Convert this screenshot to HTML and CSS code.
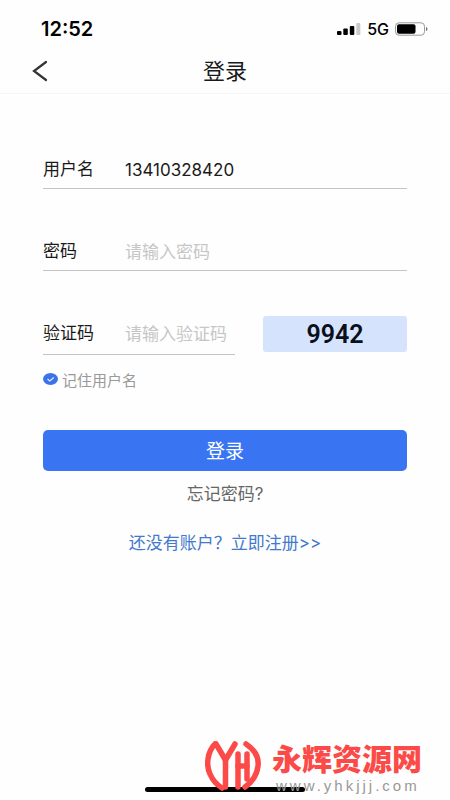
FILE: index.html
```html
<!DOCTYPE html>
<html lang="zh-CN">
<head>
<meta charset="utf-8">
<meta name="viewport" content="width=device-width, initial-scale=1">
<title>登录</title>
<link rel="stylesheet" href="styles.css">
</head>
<body>
<div class="page">
  <div class="status">
    <span class="time">12:52</span>
    <div class="status-right">
      <svg class="signal" width="24" height="12" viewBox="0 0 24 12" aria-hidden="true">
        <rect x="0" y="8" width="4.500" height="4" rx="1"/>
        <rect x="6.300" y="5.500" width="4.500" height="6.500" rx="1"/>
        <rect x="12.800" y="3" width="4.500" height="9" rx="1"/>
        <rect x="19.300" y="0" width="4" height="12" rx="1" fill="#c9c9c9"/>
      </svg>
      <span class="network">5G</span>
      <svg class="battery" width="33" height="14" viewBox="0 0 33 14" aria-hidden="true">
        <rect x="0.500" y="0.800" width="29" height="12.400" rx="3.500" fill="#fff" stroke="#999"/>
        <rect x="2" y="2.200" width="18.500" height="9.600" rx="2"/>
        <path d="M31 4.800Q32.500 5.500 32.500 7T31 9.200Z" fill="#777"/>
      </svg>
    </div>
  </div>
  <header class="header">
    <button class="back" type="button" aria-label="返回">
      <svg width="16" height="22" viewBox="0 0 16 22" aria-hidden="true"><path d="M14 2L2 11L14 20" fill="none" stroke="#333" stroke-width="2.200" stroke-linecap="round"/></svg>
    </button>
    <h1 class="title">登录</h1>
  </header>
  <form class="form">
    <div class="field">
      <label for="user">用户名</label>
      <input id="user" type="text" value="13410328420">
    </div>
    <div class="field">
      <label for="pass">密码</label>
      <input id="pass" type="password" placeholder="请输入密码">
    </div>
    <div class="code-row">
      <div class="field">
        <label for="code">验证码</label>
        <input id="code" type="text" placeholder="请输入验证码">
      </div>
      <button class="captcha" type="button">9942</button>
    </div>
    <label class="remember">
      <span class="tick">
        <input type="checkbox" checked>
        <svg width="15" height="12" viewBox="0 0 15 12" aria-hidden="true"><path d="M4.500 6L6.800 8L10.800 4.500" fill="none" stroke="#dfe9ff" stroke-width="1.200"/></svg>
      </span>
      记住用户名
    </label>
    <button class="submit" type="submit">登录</button>
    <a class="forgot" href="#">忘记密码?</a>
    <a class="register" href="#">还没有账户？立即注册&gt;&gt;</a>
  </form>
  <footer class="footer">
    <div class="home-bar"></div>
    <div class="brand">
      <svg class="logo" width="56" height="50" viewBox="0 0 56 50" aria-hidden="true">
        <g fill="none" stroke="#fb4a48" stroke-width="5.500" stroke-linecap="round" stroke-linejoin="round">
          <path d="M10 3C2 11 1 25 5 33C8 40 12 44 17 47"/>
          <path d="M11 3L20.500 19L30 3"/>
          <path d="M20.500 19V46"/>
          <path d="M33 13V46"/>
          <path d="M33 25H42"/>
          <path d="M42 13V38"/>
          <path d="M41 3C50 9 54 17 53 25C52 34 47 41 40 46"/>
        </g>
      </svg>
      <div class="brand-text">
        <span class="brand-name">永辉资源网</span>
        <span class="brand-url">www.yhkjjj.com</span>
      </div>
    </div>
  </footer>
</div>
</body>
</html>
```
FILE: styles.css
```css
* {
  box-sizing: border-box;
}

body {
  margin: 0;
  background: #fefefe;
  color: #1a1a1a;
  font-family: Inter, "Noto Sans CJK SC", sans-serif;
  font-size: 17px;
}

button,
input {
  border: 0;
  padding: 0;
  background: none;
  color: inherit;
  font: inherit;
}

a {
  text-decoration: none;
}

svg {
  display: block;
}

.page {
  display: flex;
  flex-direction: column;
  min-height: 100vh;
}

.status {
  display: flex;
  align-items: center;
  justify-content: space-between;
  height: 48px;
  padding: 10px 22px 0 41px;
  color: #000;
}

.time {
  font-size: 20px;
  font-weight: 600;
}

.status-right {
  display: flex;
  align-items: center;
  gap: 6px;
}

.network {
  font-size: 16px;
  font-weight: 500;
}

.header {
  display: grid;
  grid-template-columns: 48px 1fr 48px;
  align-items: center;
  height: 46px;
  border-bottom: 1px solid #f5f5f5;
}

.back {
  justify-self: end;
}

.title {
  margin: 0;
  font-size: 22px;
  font-weight: 400;
  line-height: 32px;
  text-align: center;
}

.form {
  display: flex;
  flex-direction: column;
  padding: 57px 43px 0;
}

.field {
  display: flex;
  align-items: center;
  height: 38px;
  margin-bottom: 44px;
  border-bottom: 1px solid #c4c4c4;
}

.field label {
  flex: 0 0 82px;
  line-height: 36px;
  padding-bottom: 2px;
}

.field input {
  flex: 1;
  min-width: 0;
  height: 36px;
  outline: 0;
}

.field input::placeholder {
  color: #c6c6c6;
  opacity: 1;
}

.code-row {
  display: grid;
  grid-template-columns: minmax(0, 4fr) minmax(0, 3fr);
  column-gap: 28px;
  align-items: start;
}

.code-row .field {
  height: 42px;
  margin: -2px 0 0;
}

.captcha {
  height: 36px;
  margin-top: 1px;
  border-radius: 3px;
  background: #d6e3fc;
  color: #0a0f1c;
  font-family: Roboto, sans-serif;
  font-size: 25px;
  font-weight: 600;
}

.remember {
  display: flex;
  align-items: center;
  gap: 4px;
  height: 24px;
  margin-top: 12px;
  color: #999;
  font-size: 15px;
}

.tick {
  display: grid;
}

.tick > * {
  grid-area: 1 / 1;
}

.tick input {
  width: 15px;
  height: 12px;
  margin: 0;
  border-radius: 50%;
  background: #3a73ea;
  appearance: none;
}

.submit {
  height: 41px;
  margin-top: 39px;
  padding-bottom: 2px;
  border-radius: 5px;
  background: #3975f3;
  color: #fff;
  font-size: 19px;
}

.forgot,
.register {
  align-self: center;
  line-height: 24px;
}

.forgot {
  margin-top: 11px;
  color: #666;
}

.register {
  margin-top: 25px;
  color: #4279cc;
}

.footer {
  position: relative;
  display: flex;
  justify-content: flex-end;
  margin-top: auto;
  padding: 0 28px 7px 0;
}

.home-bar {
  position: absolute;
  bottom: 8px;
  left: 50%;
  width: 160px;
  height: 5px;
  border-radius: 3px;
  background: #000;
  transform: translateX(-50%);
}

.brand {
  position: relative;
  display: flex;
  align-items: center;
  gap: 11px;
}

.brand-text {
  display: flex;
  flex-direction: column;
}

.brand-name {
  color: #fb4a48;
  font-size: 30px;
  font-weight: 900;
  line-height: 40px;
}

.brand-url {
  padding-left: 4px;
  color: #999;
  font-family: "Liberation Sans", sans-serif;
  font-size: 15px;
  letter-spacing: 3px;
  line-height: 14px;
}
```
